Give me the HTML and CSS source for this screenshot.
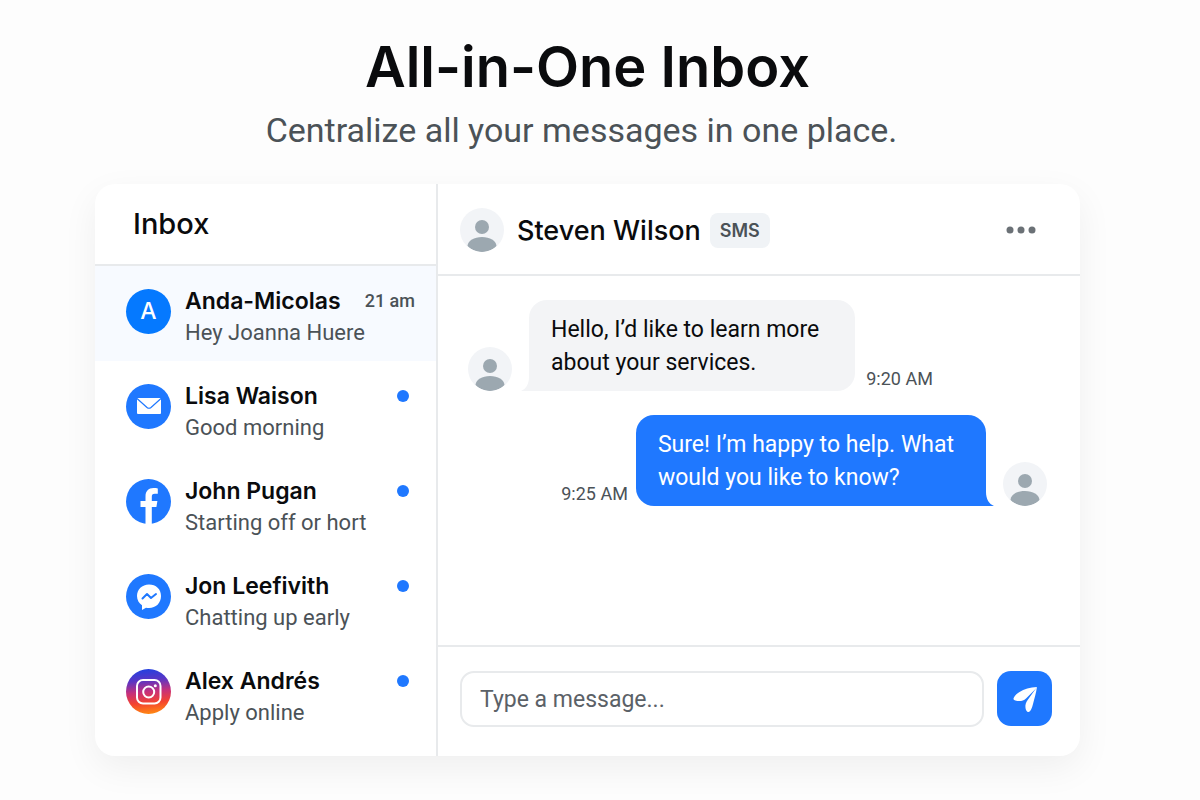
FILE: index.html
```html
<!DOCTYPE html>
<html lang="en">
<head>
  <meta charset="UTF-8" />
  <meta name="viewport" content="width=device-width,initial-scale=1.0"/>
  <title>All-in-One Inbox</title>
  <link rel="stylesheet" href="styles.css">
</head>
<body>

<!-- Person icon shared by the chat avatars -->
<svg class="sprite" aria-hidden="true">
  <symbol id="person" viewBox="0 0 44 44">
    <circle cx="22" cy="19" r="7"/>
    <path d="M7.500 38C8 32.500 14 29 22 29s14 3.500 14.500 9C33 41.500 28 44 22 44S11 41.500 7.500 38z"/>
  </symbol>
</svg>

<header class="hero">
  <h1>All-in-One Inbox</h1>
  <p>Centralize all your messages in one place.</p>
</header>

<main class="app">
  <aside class="sidebar">
    <h2 class="sidebar-title">Inbox</h2>

    <ul class="threads">
      <li class="thread active">
        <span class="channel letter">A</span>
        <div class="thread-text">
          <h3>Anda-Micolas</h3>
          <p>Hey Joanna Huere</p>
        </div>
        <time>21 am</time>
      </li>
      <li class="thread">
        <svg class="channel" viewBox="0 0 45 45">
          <circle cx="22.500" cy="22.500" r="22.500" fill="#1f78ff"/>
          <rect x="11" y="14" width="24" height="16" rx="1" fill="#fff"/>
          <path d="M11 14.500l10 9q2 1.500 4 0l10-9" fill="none" stroke="#1f78ff" stroke-width="1.200"/>
        </svg>
        <div class="thread-text">
          <h3>Lisa Waison</h3>
          <p>Good morning</p>
        </div>
        <span class="unread"></span>
      </li>
      <li class="thread">
        <svg class="channel" viewBox="0 0 45 45">
          <circle cx="22.500" cy="22.500" r="22.500" fill="#1f78ff"/>
          <path d="M19.500 45V28H14.500V22h5v-4.500c0-5.500 3-8.500 8-8.500 1.800 0 3 .100 4.300.400v5.300h-3c-2.400 0-3 1.200-3 3V22h5.600l-1 6h-4.600v17z" fill="#fff"/>
        </svg>
        <div class="thread-text">
          <h3>John Pugan</h3>
          <p>Starting off or hort</p>
        </div>
        <span class="unread"></span>
      </li>
      <li class="thread">
        <svg class="channel" viewBox="0 0 45 45">
          <circle cx="22.500" cy="22.500" r="22.500" fill="#1f78ff"/>
          <path d="M23 10.500c-7 0-12 5-12 11.500 0 4 2 7.300 5 9.300V36l4-2.200c1 .200 2 .300 3 .300 7 0 12-5 12-12s-5-11.600-12-11.600z" fill="#fff"/>
          <path d="M16.500 24.500l4.500-4.500 4 4 5-4" fill="none" stroke="#1f78ff" stroke-width="2" stroke-linecap="round" stroke-linejoin="round"/>
        </svg>
        <div class="thread-text">
          <h3>Jon Leefivith</h3>
          <p>Chatting up early</p>
        </div>
        <span class="unread"></span>
      </li>
      <li class="thread">
        <svg class="channel" viewBox="0 0 45 45">
          <defs>
            <linearGradient id="insta" x1="0.450" y1="0" x2="0.550" y2="1">
              <stop offset="0" stop-color="#2340e0"/>
              <stop offset="0.250" stop-color="#5a35c4"/>
              <stop offset="0.500" stop-color="#c5307c"/>
              <stop offset="0.750" stop-color="#f4432f"/>
              <stop offset="1" stop-color="#ff8a12"/>
            </linearGradient>
          </defs>
          <circle cx="22.500" cy="22.500" r="22.500" fill="url(#insta)"/>
          <g fill="none" stroke="#fff" stroke-width="2">
            <rect x="11" y="11" width="23.500" height="23.500" rx="6"/>
            <circle cx="22.700" cy="23" r="5.500"/>
          </g>
          <circle cx="29.300" cy="16.800" r="1.500" fill="#fff"/>
        </svg>
        <div class="thread-text">
          <h3>Alex Andrés</h3>
          <p>Apply online</p>
        </div>
        <span class="unread"></span>
      </li>
    </ul>
  </aside>

  <section class="chat">
    <div class="chat-header">
      <svg class="avatar"><use href="#person"/></svg>
      <h2>Steven Wilson</h2>
      <span class="badge">SMS</span>
      <button type="button" class="more-btn" aria-label="More options">
        <svg width="30" height="8" viewBox="0 0 30 8" fill="#6b7176">
          <circle cx="4" cy="4" r="3.500"/>
          <circle cx="15" cy="4" r="3.500"/>
          <circle cx="26" cy="4" r="3.500"/>
        </svg>
      </button>
    </div>

    <div class="messages">
      <div class="message incoming">
        <svg class="avatar"><use href="#person"/></svg>
        <div class="bubble">
          Hello, I’d like to learn more<br>about your services.
          <svg class="tail" viewBox="0 0 8 14"><path d="M8 0C8 7 5 12 0 14h8z"/></svg>
        </div>
        <time>9:20 AM</time>
      </div>
      <div class="message outgoing">
        <time>9:25 AM</time>
        <div class="bubble">
          Sure! I’m happy to help. What<br>would you like to know?
          <svg class="tail" viewBox="0 0 8 14"><path d="M0 0c0 7 3 12 8 14H0z"/></svg>
        </div>
        <svg class="avatar"><use href="#person"/></svg>
      </div>
    </div>

    <form class="composer">
      <input type="text" placeholder="Type a message..." aria-label="Type a message"/>
      <button type="submit" class="send-btn" aria-label="Send">
        <svg width="28" height="28" viewBox="0 0 28 28" fill="#fff">
          <path d="M26 2C19 2.500 13 4 8.500 7 5.500 9 3 11.500 2.500 13.500c-.3 1.700 2 2.700 5.500 2.500 3 0 5-.500 7-2.500L25 3.500z"/>
          <path d="M26 2l-9 12.500c-2 2.500-3 5.500-2.500 8.500.300 2.300 1.500 4.200 3 4 2 0 3.500-4 4.500-8 1.500-5.500 3-11 4-17z"/>
        </svg>
      </button>
    </form>
  </section>
</main>

</body>
</html>
```
FILE: styles.css
```css
* {
  margin: 0;
  padding: 0;
  box-sizing: border-box;
}
body {
  font-family: Roboto, "Liberation Sans", sans-serif;
  background: #fdfdfd;
  color: #0a0b0d;
  min-height: 100vh;
  padding: 30px 120px 44px 95px;
}
h1, h2, h3 {
  font-family: Inter, "Liberation Sans", sans-serif;
}
.sprite {
  position: absolute;
  width: 0;
  height: 0;
}
.hero {
  text-align: center;
  margin-bottom: 28px;
}
.hero h1 {
  font-size: 56px;
  font-weight: 600;
  line-height: 74px;
}
.hero p {
  padding-right: 12px;
  font-size: 34px;
  line-height: 52px;
  color: #4b5257;
}

/* App window */
.app {
  display: flex;
  background: #fff;
  border-radius: 20px;
  box-shadow: 0 12px 36px rgba(0,0,0,0.06);
}
.sidebar {
  flex: 0 0 343px;
  min-width: 0;
  border-right: 2px solid #e8eaec;
  padding-bottom: 15px;
}
.sidebar-title {
  font-size: 29px;
  font-weight: 500;
  line-height: 80px;
  padding-left: 38px;
  border-bottom: 2px solid #e8eaec;
}
.threads {
  list-style: none;
}
.thread {
  display: flex;
  align-items: flex-start;
  gap: 14px;
  height: 95px;
  padding: 19px 21px 0 31px;
}
.thread.active {
  background: #f7faff;
}
.channel {
  flex: none;
  width: 45px;
  height: 45px;
  margin-top: 4px;
}
.letter {
  border-radius: 50%;
  background: #0579ff;
  color: #fff;
  font-family: Inter, "Liberation Sans", sans-serif;
  font-size: 23px;
  font-weight: 500;
  line-height: 45px;
  text-align: center;
}
.thread-text {
  flex: 1;
  min-width: 0;
  white-space: nowrap;
}
.thread h3 {
  font-size: 23px;
  font-weight: 600;
  line-height: 32px;
}
.thread p {
  font-size: 22px;
  line-height: 32px;
  color: #4b5257;
}
.thread time {
  font-size: 18px;
  font-weight: 500;
  line-height: 32px;
  white-space: nowrap;
  color: #4b5257;
}
.unread {
  flex: none;
  width: 12px;
  height: 12px;
  margin: 10px 6px 0 0;
  border-radius: 50%;
  background: #1f78ff;
}

/* Conversation */
.chat {
  flex: 1;
  display: flex;
  flex-direction: column;
}
.chat-header {
  display: flex;
  align-items: center;
  height: 92px;
  padding: 2px 40px 0 22px;
  border-bottom: 2px solid #e8eaec;
}
.chat-header h2 {
  font-size: 27px;
  font-weight: 500;
  margin: 0 9px 0 13px;
}
.avatar {
  flex: none;
  width: 44px;
  height: 44px;
  border-radius: 50%;
  background: #f2f4f7;
  fill: #9ca8b0;
}
.badge {
  padding: 0 10px;
  border-radius: 8px;
  background: #f0f3f6;
  color: #4b5257;
  font-family: Inter, "Liberation Sans", sans-serif;
  font-size: 18px;
  font-weight: 600;
  line-height: 35px;
}
.more-btn {
  display: flex;
  margin-left: auto;
  padding: 4px;
  border: none;
  background: none;
  cursor: pointer;
}
.messages {
  flex: 1;
  display: flex;
  flex-direction: column;
  gap: 24px;
  padding: 24px 33px 24px 30px;
}
.message {
  display: flex;
  align-items: flex-end;
}
.outgoing {
  justify-content: flex-end;
}
.bubble {
  position: relative;
  padding: 13px 32px 12px 22px;
  border-radius: 18px;
  background: #f3f4f6;
  font-size: 23px;
  line-height: 33px;
}
.incoming .bubble {
  margin: 0 11px 0 17px;
  padding-right: 36px;
  border-bottom-left-radius: 0;
}
.outgoing .bubble {
  margin: 0 17px 0 8px;
  border-bottom-right-radius: 0;
  background: #1f78ff;
  color: #fff;
}
.tail {
  position: absolute;
  bottom: 0;
  width: 8px;
  height: 14px;
}
.incoming .tail {
  right: 100%;
  fill: #f3f4f6;
}
.outgoing .tail {
  left: 100%;
  fill: #1f78ff;
}
.message time {
  font-size: 18px;
  line-height: 24px;
  color: #4b5257;
}

/* Message form */
.composer {
  display: flex;
  gap: 13px;
  padding: 24px 28px 29px 22px;
  border-top: 2px solid #e8eaec;
}
.composer input {
  flex: 1;
  min-width: 0;
  height: 56px;
  padding: 0 18px;
  border: 2px solid #e8eaec;
  border-radius: 14px;
  background: #fff;
  font: inherit;
  font-size: 23px;
}
.composer input::placeholder {
  color: #5b6167;
}
.send-btn {
  display: flex;
  align-items: center;
  justify-content: center;
  width: 55px;
  height: 55px;
  border: none;
  border-radius: 14px;
  background: #1f78ff;
  cursor: pointer;
}
```
